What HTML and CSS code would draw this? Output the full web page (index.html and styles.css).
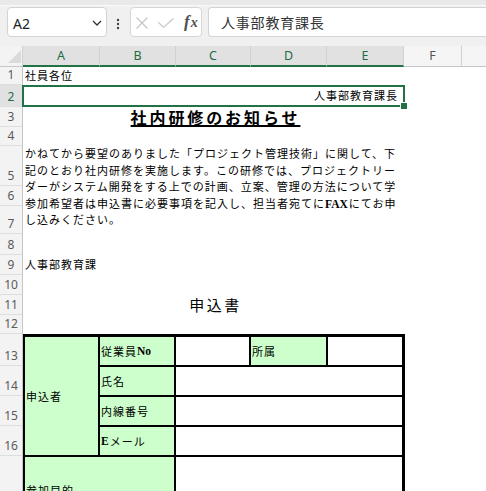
FILE: index.html
```html
<!DOCTYPE html>
<html lang="ja">
<head>
<meta charset="utf-8">
<title>社内研修のお知らせ</title>
<link rel="stylesheet" href="styles.css">
</head>
<body>
<div class="app">
  <div class="ribbon"></div>
  <div class="fbar">
    <div class="namebox">
      <span class="ref">A2</span>
      <svg class="chev" width="10" height="6" viewBox="0 0 10 6"><path d="M1 1 L5 5 L9 1" fill="none" stroke="#333" stroke-width="1.3"/></svg>
    </div>
    <svg class="dots" width="4" height="12" viewBox="0 0 4 12"><circle cx="2" cy="2" r="1.2"/><circle cx="2" cy="6" r="1.2"/><circle cx="2" cy="10" r="1.2"/></svg>
    <div class="fbtns">
      <svg class="ico-x" width="12" height="12" viewBox="0 0 12 12"><path d="M0.5 0.5 L11.5 11.5 M11.5 0.5 L0.5 11.5" stroke="#c4c4c4" stroke-width="1.1" fill="none"/></svg>
      <svg class="ico-ok" width="16" height="10" viewBox="0 0 16 10"><path d="M0.5 4.5 L5.5 9.3 L15.5 0.5" stroke="#c4c4c4" stroke-width="1.1" fill="none"/></svg>
      <span class="fx"><span class="fx-f">f</span><span class="fx-x">x</span></span>
    </div>
    <div class="finput">人事部教育課長</div>
  </div>

  <div class="sheet">
    <div class="colheads">
      <div class="corner"><svg width="23" height="21" viewBox="0 0 23 21"><polygon points="21,4 21,17 8,17" fill="#dadada"/></svg></div>
      <div class="ch sel ca">A</div>
      <div class="ch sel cb">B</div>
      <div class="ch sel cc">C</div>
      <div class="ch sel cd">D</div>
      <div class="ch sel ce">E</div>
      <div class="ch cf">F</div>
      <div class="ch cg"></div>
    </div>

    <div class="grid">
      <div class="rowheads">
        <div class="rh r1">1</div>
        <div class="rh r2 sel">2</div>
        <div class="rh r3">3</div>
        <div class="rh r4">4</div>
        <div class="rh r5">5</div>
        <div class="rh r6">6</div>
        <div class="rh r7">7</div>
        <div class="rh r8">8</div>
        <div class="rh r9">9</div>
        <div class="rh r10">10</div>
        <div class="rh r11">11</div>
        <div class="rh r12">12</div>
        <div class="rh r13">13</div>
        <div class="rh r14">14</div>
        <div class="rh r15">15</div>
        <div class="rh r16">16</div>
        <div class="rh r17"></div>
      </div>

      <div class="cells">
        <div class="row r1"><div class="merged left">社員各位</div></div>
        <div class="row r2"><div class="merged right selbox">人事部教育課長<span class="handle"></span></div></div>
        <div class="row r3"><div class="merged center title"><span class="title-text">社内研修のお知らせ</span></div></div>
        <div class="row r4"></div>
        <div class="row r5">
          <div class="merged para">かねてから要望のありました「プロジェクト管理技術」に関して、下<br>記のとおり社内研修を実施します。この研修では、プロジェクトリー<br>ダーがシステム開発をする上での計画、立案、管理の方法について学<br>参加希望者は申込書に必要事項を記入し、担当者宛てに<span class="latin">FAX</span>にてお申<br>し込みください。</div>
        </div>
        <div class="row r6"></div>
        <div class="row r7"></div>
        <div class="row r8"></div>
        <div class="row r9"><div class="merged left">人事部教育課</div></div>
        <div class="row r10"></div>
        <div class="row r11"><div class="merged center subtitle">申込書</div></div>
        <div class="row r12"></div>
        <div class="formwrap">
          <div class="form">
            <div class="fc g rspan4">申込者</div>
            <div class="fc g">従業員<span class="latin">No</span></div>
            <div class="fc"></div>
            <div class="fc g">所属</div>
            <div class="fc"></div>
            <div class="fc g">氏名</div>
            <div class="fc cspan3"></div>
            <div class="fc g">内線番号</div>
            <div class="fc cspan3"></div>
            <div class="fc g"><span class="latin">E</span>メール</div>
            <div class="fc cspan3"></div>
            <div class="fc g cspan2">参加目的</div>
            <div class="fc cspan3"></div>
          </div>
        </div>
      </div>
    </div>
  </div>
</div>
</body>
</html>
```

FILE: styles.css
```css
* { box-sizing: border-box; }
html, body { margin: 0; padding: 0; }
body {
  width: 486px;
  height: 491px;
  overflow: hidden;
  background: #ffffff;
  font-family: "Noto Sans", "Noto Sans CJK JP", sans-serif;
}
.app { width: 486px; height: 491px; overflow: hidden; }

/* ---------- formula bar ---------- */
.ribbon {
  height: 6px;
  background: #e9e9e9;
  border-bottom: 1px solid #f9f9f9;
}
.fbar {
  height: 40px;
  background: #f0f0f0;
  display: flex;
  align-items: flex-start;
  padding: 1px 0 0 7px;
}
.namebox {
  width: 100px;
  height: 30px;
  background: #fff;
  border: 1px solid #d3d3d3;
  border-radius: 4px;
  display: flex;
  align-items: center;
  justify-content: space-between;
  padding: 3px 4px 0 5px;
}
.ref { font-size: 14px; color: #222; line-height: 16px; }
.chev { margin-top: -2px; }
.dots { margin: 11px 0 0 9px; fill: #444; }
.fbtns {
  margin-left: 10px;
  width: 72px;
  height: 30px;
  background: #fff;
  border: 1px solid #d6d6d6;
  border-radius: 4px;
  display: flex;
  align-items: center;
  padding-left: 5px;
}
.ico-x { margin-top: 2px; }
.ico-ok { margin-left: 10px; margin-top: 2px; }
.fx {
  margin-left: 10px;
  font-family: "Liberation Serif", serif;
  font-style: italic;
  font-weight: 700;
  color: #505050;
  line-height: 16px;
}
.fx-f { font-size: 17px; }
.fx-x { font-size: 14px; margin-left: 1px; }
.finput {
  margin-left: 6px;
  flex: 1;
  height: 30px;
  background: #fff;
  border: 1px solid #d3d3d3;
  border-right: none;
  border-radius: 4px 0 0 4px;
  padding: 0 0 0 12px;
  font-family: "Noto Sans CJK JP", sans-serif;
  font-size: 14px;
  letter-spacing: 0.8px;
  line-height: 28px;
  color: #333;
}

/* ---------- column headers ---------- */
.colheads { display: flex; height: 21px; }
.corner {
  width: 23px;
  height: 21px;
  background: #f3f3f3;
  border-right: 1px solid #d0d0d0;
  border-bottom: 1px solid #c6c6c6;
}
.corner svg { display: block; }
.ch {
  height: 21px;
  background: #f5f5f5;
  border-right: 1px solid #d0d0d0;
  border-bottom: 1px solid #c6c6c6;
  font-size: 12.5px;
  color: #555;
  display: flex;
  align-items: center;
  justify-content: center;
  padding-bottom: 1px;
}
.ch.sel {
  background: #e1e1e1;
  color: #1e6b45;
  border-bottom: 2px solid #217346;
  padding-bottom: 0;
}
.ca { width: 77px; }
.cb { width: 76px; }
.cc { width: 75px; }
.cd { width: 76px; }
.ce { width: 77px; }
.cf { width: 58px; }
.cg { flex: 1; border-right: none; }

/* ---------- rows ---------- */
.grid { display: flex; }
.rowheads {
  width: 23px;
  flex: none;
  background: #f3f3f3;
  border-right: 1px solid #c6c6c6;
}
.rh {
  display: flex;
  align-items: flex-end;
  justify-content: center;
  padding-bottom: 2px;
  border-bottom: 1px solid #dedede;
  font-size: 12px;
  line-height: 14px;
  color: #5a5a5a;
}
.rh.sel { background: #e1e1e1; color: #1e6b45; }

.r1 { height: 18px; }
.r2 { height: 22px; }
.r3 { height: 20px; }
.r4 { height: 19px; }
.r5 { height: 40px; }
.r6 { height: 20px; }
.r7 { height: 28px; }
.r8 { height: 21px; }
.r9 { height: 20px; }
.r10 { height: 20px; }
.r11 { height: 20px; }
.r12 { height: 19px; }
.r13 { height: 32px; }
.r14 { height: 30px; }
.r15 { height: 30px; }
.r16 { height: 30px; }
.r17 { height: 70px; }

.cells {
  flex: 1;
  font-family: "Liberation Serif", "Noto Sans CJK JP", sans-serif;
  font-size: 11px;
  letter-spacing: 1px;
  color: #000;
}
.row { position: relative; }
.merged {
  width: 382px;
  height: 100%;
  display: flex;
  align-items: center;
  white-space: nowrap;
  line-height: 14px;
}
.left { padding-left: 2px; }
.right { justify-content: flex-end; padding-right: 5px; }
.center { justify-content: center; padding-left: 3px; }
.selbox {
  position: relative;
  border: 2px solid #217346;
  margin-left: -1px;
  width: 383px;
}
.handle {
  position: absolute;
  right: -4px;
  bottom: -4px;
  width: 6px;
  height: 6px;
  background: #217346;
  outline: 1px solid #fff;
}
.title-text {
  font-family: "Noto Sans CJK JP", sans-serif;
  font-weight: 700;
  font-size: 16px;
  letter-spacing: 2.9px;
  line-height: 20px;
  text-decoration: underline;
  text-decoration-thickness: 1.5px;
  text-underline-offset: 1px;
}
.subtitle {
  font-family: "Noto Sans CJK JP", sans-serif;
  font-size: 15px;
  letter-spacing: 2.5px;
  line-height: 20px;
  font-weight: 400;
}
.para {
  display: block;
  height: auto;
  line-height: 16.5px;
  padding-left: 2px;
}
.latin {
  letter-spacing: 0;
  margin-right: 1px;
  font-size: 11.5px;
  font-weight: 700;
}

/* ---------- form ---------- */
.formwrap { height: 192px; }
.form {
  width: 382px;
  border-top: 3px double #000;
  border-right: 3px double #000;
  border-left: 2px solid #000;
  display: grid;
  grid-template-columns: 73px 74px 73px 75px 74px;
  grid-template-rows: 28px 28px 28px 28px 65px;
  gap: 2px;
  background: #000;
}
.fc {
  background: #fff;
  display: flex;
  align-items: center;
  padding-left: 1px;
  white-space: nowrap;
}
.fc.g { background: #ccffcc; }
.rspan4 { grid-row: span 4; }
.cspan2 { grid-column: span 2; }
.cspan3 { grid-column: span 3; }
```
